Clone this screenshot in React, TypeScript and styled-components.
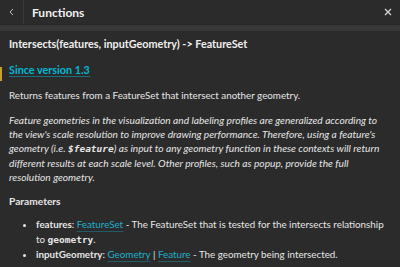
import React from "react";
import styled, { createGlobalStyle } from "styled-components";

const Global = createGlobalStyle`
  html, body { margin: 0; padding: 0; background: #2b2b2b; }
  body { font-family: "Lato", "Noto Sans", sans-serif; color: #e6e6e6; }
`;

const Panel = styled.div`
  width: 400px;
  height: 267px;
  overflow: hidden;
  background: #2b2b2b;
  position: relative;
  display: flex;
  flex-direction: column;
`;

const Header = styled.div`
  display: flex;
  align-items: stretch;
  height: 24px;
  background: #2b2b2b;
  border-bottom: 1px solid #262626;
`;

const BackButton = styled.div`
  width: 23px;
  display: flex;
  align-items: center;
  justify-content: center;
  border-right: 1px solid #3a3a3a;
  color: #bdbdbd;
`;

const Title = styled.div`
  flex: 1;
  display: flex;
  align-items: center;
  padding-left: 8px;
  font-size: 12px;
  font-weight: 700;
  color: #f2f2f2;
`;

const CloseButton = styled.div`
  width: 16px;
  display: flex;
  align-items: center;
  justify-content: center;
  margin-right: 4px;
  color: #d8d8d8;
`;

const Band = styled.div`
  height: 6px;
  background: #383838;
`;

const Content = styled.div`
  padding: 6px 10px 0 9px;
  font-size: 9.8px;
  line-height: 14px;
`;

const Signature = styled.div`
  font-weight: 700;
  font-size: 10.8px;
  color: #f0f0f0;
`;

const Since = styled.div`
  margin-top: 12px;
  font-weight: 700;
  font-size: 10.8px;
  color: #00b7d3;
  display: inline-block;
  border-bottom: 1px solid #1b6e80;
  line-height: 13px;
`;

const P = styled.p<{ $italic?: boolean }>`
  margin: 11px 0 0 0;
  font-style: ${(p) => (p.$italic ? "italic" : "normal")};
  font-size: ${(p) => (p.$italic ? "10.2px" : "9.8px")};
  padding-right: ${(p) => (p.$italic ? "4px" : "0")};
`;

const Code = styled.code`
  font-family: "DejaVu Sans Mono", monospace;
  font-size: 9.5px;
  font-weight: 700;
`;

const Heading = styled.div`
  margin-top: 10px;
  font-weight: 700;
  font-size: 10.2px;
`;

const List = styled.ul`
  margin: 9px 0 0 0;
  padding-left: 27px;
  line-height: 15px;
`;

const Name = styled.span`
  font-weight: 700;
`;

const Link = styled.span`
  color: #1fb0cc;
  text-decoration: underline;
  text-decoration-color: #1f5c68;
  text-underline-offset: 3px;
`;

const Mark = styled.div`
  position: absolute;
  left: 0;
  top: 67px;
  width: 2px;
  height: 14px;
  background: #c9a227;
`;

export default function App() {
  return (
    <>
      <Global />
      <Panel>
        <Header>
          <BackButton>
            <svg width="8" height="8" viewBox="0 0 8 8">
              <path d="M5 1 L2 4 L5 7" stroke="currentColor" strokeWidth="1" fill="none" />
            </svg>
          </BackButton>
          <Title>Functions</Title>
          <CloseButton>
            <svg width="8" height="8" viewBox="0 0 8 8">
              <path d="M1 1 L7 7 M7 1 L1 7" stroke="currentColor" strokeWidth="1.2" fill="none" />
            </svg>
          </CloseButton>
        </Header>
        <Band />
        <Content>
          <Signature>Intersects(features, inputGeometry) -&gt; FeatureSet</Signature>
          <Since>Since version 1.3</Since>
          <P>Returns features from a FeatureSet that intersect another geometry.</P>
          <P $italic>
            Feature geometries in the visualization and labeling profiles are generalized according to
            the view's scale resolution to improve drawing performance. Therefore, using a feature's
            geometry (i.e. <Code>$feature</Code>) as input to any geometry function in these contexts will return
            different results at each scale level. Other profiles, such as popup, provide the full
            resolution geometry.
          </P>
          <Heading>Parameters</Heading>
          <List>
            <li>
              <Name>features</Name>: <Link>FeatureSet</Link> - The FeatureSet that is tested for the intersects relationship to{" "}
              <Code>geometry</Code>.
            </li>
            <li>
              <Name>inputGeometry</Name>: <Link>Geometry</Link> | <Link>Feature</Link> - The geometry being intersected.
            </li>
          </List>
        </Content>
        <Mark />
      </Panel>
    </>
  );
}
